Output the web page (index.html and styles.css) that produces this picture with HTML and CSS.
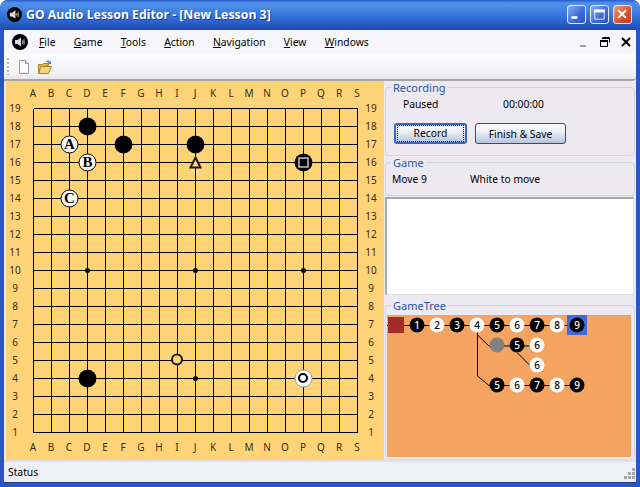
FILE: index.html
```html
<!DOCTYPE html>
<html lang="en">
<head>
<meta charset="utf-8">
<title>GO Audio Lesson Editor</title>
<link rel="stylesheet" href="styles.css">
</head>
<body>
<div class="window">
  <header class="titlebar">
    <svg class="app-icon" viewBox="0 0 16 16"><circle cx="8" cy="8" r="8" fill="#000"/><path d="M3 6h2.500L9 3.500v9L5.500 10H3z" fill="#ddd"/><path d="M10.500 6v4M12 5v6M10 8h3" stroke="#999" fill="none"/></svg>
    <span class="title-text">GO Audio Lesson Editor - [New Lesson 3]</span>
    <div class="caption-buttons">
      <span class="cap cap-blue"><svg viewBox="0 0 20 20"><rect x="4" y="12" width="7" height="3" fill="#fff"/></svg></span>
      <span class="cap cap-blue"><svg viewBox="0 0 20 20"><path d="M4.500 6.500h11v9h-11z M4 5h12v2H4z" fill="none" stroke="#fff"/><rect x="4" y="4" width="12" height="2" fill="#fff"/></svg></span>
      <span class="cap cap-red"><svg viewBox="0 0 20 20"><path d="M5 5l9 9M14 5l-9 9" stroke="#fff" stroke-width="2.400"/></svg></span>
    </div>
  </header>
  <div class="client">
    <nav class="menubar">
      <svg class="menu-icon" viewBox="0 0 16 16"><circle cx="8" cy="8" r="8" fill="#000"/><path d="M3 6h2.500L9 3.500v9L5.500 10H3z" fill="#ddd"/><path d="M10.500 6v4M12 5v6M10 8h3" stroke="#999" fill="none"/></svg>
      <span class="menu-item"><u>F</u>ile</span>
      <span class="menu-item"><u>G</u>ame</span>
      <span class="menu-item"><u>T</u>ools</span>
      <span class="menu-item"><u>A</u>ction</span>
      <span class="menu-item"><u>N</u>avigation</span>
      <span class="menu-item"><u>V</u>iew</span>
      <span class="menu-item"><u>W</u>indows</span>
      <div class="mdi-buttons">
        <svg viewBox="0 0 12 12"><rect x="2" y="9" width="6" height="2" fill="#a0a0a0"/></svg>
        <svg viewBox="0 0 12 12"><path d="M3.500 1.500h7v5M1.500 4.500h7v6h-7z M3 2.500h7" fill="none" stroke="#000"/><path d="M1 4h8v2H1z" fill="#000"/></svg>
        <svg viewBox="0 0 12 12"><path d="M2 2l8 8M10 2l-8 8" stroke="#000" stroke-width="2"/></svg>
      </div>
    </nav>
    <div class="toolbar">
      <span class="grip"></span>
      <svg class="tool" viewBox="0 0 16 16"><path d="M3.500 1.500h6l3 3v10h-9z" fill="#fff" stroke="#8a9ab5"/><path d="M9.500 1.500v3h3" fill="#dfe6f0" stroke="#8a9ab5"/></svg>
      <svg class="tool" viewBox="0 0 16 16"><path d="M1.500 5.500h4l1-1h5v2l-2 0-7 8h-1z" fill="#e8b84a" stroke="#a88430"/><path d="M3.500 7.500h11l-3 7h-9.500z" fill="#f5d677" stroke="#a88430"/><path d="M9 3c1-2 3-2 4 0l1-1v3h-3l1-1c-.5-.8-1.500-1-3-1z" fill="#4a78b8"/></svg>
    </div>
    <main class="main">
      <section class="board">
        <svg class="board-svg" viewBox="6 81 378 379" width="378" height="379">
          <path class="grid" d="M33.500 108.500H357.500M33.500 126.500H357.500M33.500 144.500H357.500M33.500 162.500H357.500M33.500 180.500H357.500M33.500 198.500H357.500M33.500 216.500H357.500M33.500 234.500H357.500M33.500 252.500H357.500M33.500 270.500H357.500M33.500 288.500H357.500M33.500 306.500H357.500M33.500 324.500H357.500M33.500 342.500H357.500M33.500 360.500H357.500M33.500 378.500H357.500M33.500 396.500H357.500M33.500 414.500H357.500M33.500 432.500H357.500M33.500 108.500V432.500M51.500 108.500V432.500M69.500 108.500V432.500M87.500 108.500V432.500M105.500 108.500V432.500M123.500 108.500V432.500M141.500 108.500V432.500M159.500 108.500V432.500M177.500 108.500V432.500M195.500 108.500V432.500M213.500 108.500V432.500M231.500 108.500V432.500M249.500 108.500V432.500M267.500 108.500V432.500M285.500 108.500V432.500M303.500 108.500V432.500M321.500 108.500V432.500M339.500 108.500V432.500M357.500 108.500V432.500"/>
          <g class="labels">
            <text x="33" y="96.500">A</text><text x="51" y="96.500">B</text><text x="69" y="96.500">C</text><text x="87" y="96.500">D</text><text x="105" y="96.500">E</text><text x="123" y="96.500">F</text><text x="141" y="96.500">G</text><text x="159" y="96.500">H</text><text x="177" y="96.500">I</text><text x="195" y="96.500">J</text><text x="213" y="96.500">K</text><text x="231" y="96.500">L</text><text x="249" y="96.500">M</text><text x="267" y="96.500">N</text><text x="285" y="96.500">O</text><text x="303" y="96.500">P</text><text x="321" y="96.500">Q</text><text x="339" y="96.500">R</text><text x="357" y="96.500">S</text>
            <text x="33" y="451">A</text><text x="51" y="451">B</text><text x="69" y="451">C</text><text x="87" y="451">D</text><text x="105" y="451">E</text><text x="123" y="451">F</text><text x="141" y="451">G</text><text x="159" y="451">H</text><text x="177" y="451">I</text><text x="195" y="451">J</text><text x="213" y="451">K</text><text x="231" y="451">L</text><text x="249" y="451">M</text><text x="267" y="451">N</text><text x="285" y="451">O</text><text x="303" y="451">P</text><text x="321" y="451">Q</text><text x="339" y="451">R</text><text x="357" y="451">S</text>
            <text x="15" y="112">19</text><text x="15" y="130">18</text><text x="15" y="148">17</text><text x="15" y="166">16</text><text x="15" y="184">15</text><text x="15" y="202">14</text><text x="15" y="220">13</text><text x="15" y="238">12</text><text x="15" y="256">11</text><text x="15" y="274">10</text><text x="15" y="292">9</text><text x="15" y="310">8</text><text x="15" y="328">7</text><text x="15" y="346">6</text><text x="15" y="364">5</text><text x="15" y="382">4</text><text x="15" y="400">3</text><text x="15" y="418">2</text><text x="15" y="436">1</text>
            <text x="371" y="112">19</text><text x="371" y="130">18</text><text x="371" y="148">17</text><text x="371" y="166">16</text><text x="371" y="184">15</text><text x="371" y="202">14</text><text x="371" y="220">13</text><text x="371" y="238">12</text><text x="371" y="256">11</text><text x="371" y="274">10</text><text x="371" y="292">9</text><text x="371" y="310">8</text><text x="371" y="328">7</text><text x="371" y="346">6</text><text x="371" y="364">5</text><text x="371" y="382">4</text><text x="371" y="400">3</text><text x="371" y="418">2</text><text x="371" y="436">1</text>
          </g>
          <circle cx="87.500" cy="270.500" r="2.500"/><circle cx="195.500" cy="270.500" r="2.500"/><circle cx="303.500" cy="270.500" r="2.500"/><circle cx="195.500" cy="378.500" r="2.500"/>
          <circle cx="87.500" cy="126.500" r="9"/><circle cx="123.500" cy="144.500" r="9"/><circle cx="195.500" cy="144.500" r="9"/><circle cx="87.500" cy="378.500" r="9"/>
          <circle cx="303.500" cy="162.500" r="9"/>
          <rect x="299" y="158" width="9" height="9" class="square-mark"/>
          <g class="white-stone"><circle cx="69.500" cy="144.500" r="8.500"/><circle cx="87.500" cy="162.500" r="8.500"/><circle cx="69.500" cy="198.500" r="8.500"/></g>
          <g class="stone-labels"><text x="69.500" y="149">A</text><text x="87.500" y="167">B</text><text x="69.500" y="203">C</text></g>
          <path class="triangle" d="M195.500 157.500l5 10h-10z"/>
          <circle class="ring" cx="177" cy="359.500" r="5"/>
          <circle class="last-white" cx="303.500" cy="378.500" r="8.500"/>
          <circle class="last-ring" cx="303" cy="378" r="4"/>
        </svg>
      </section>
      <aside class="side">
        <fieldset class="group group-rec">
          <legend>Recording</legend>
          <div class="status-row"><span class="paused">Paused</span><span>00:00:00</span></div>
          <div class="button-row">
            <button class="btn btn-record" type="button"><span>Record</span></button>
            <button class="btn btn-finish" type="button"><span>Finish &amp; Save</span></button>
          </div>
        </fieldset>
        <fieldset class="group group-game">
          <legend>Game</legend>
          <div class="game-row"><span class="move">Move 9</span><span>White to move</span></div>
        </fieldset>
        <div class="notes"></div>
        <fieldset class="group group-tree">
          <legend>GameTree</legend>
          <svg class="tree" viewBox="387 315 244 142" width="244" height="142">
            <path class="tree-line" d="M387 325.500H577M477.500 325.500V376L489 385.500H577M477.500 335L489 346H537M517.500 353L530 365.500"/>
            <rect x="388" y="317" width="16" height="16" fill="#a52a2a"/>
            <rect x="567" y="315" width="20" height="20" fill="#4169e1"/>
            <circle cx="417" cy="325" r="7.500"/><circle cx="457" cy="325" r="7.500"/><circle cx="497" cy="325" r="7.500"/><circle cx="537" cy="325" r="7.500"/><circle cx="577" cy="325" r="7.500"/>
            <circle cx="517" cy="345" r="7.500"/><circle cx="497" cy="385" r="7.500"/><circle cx="537" cy="385" r="7.500"/><circle cx="577" cy="385" r="7.500"/>
            <circle cx="497" cy="345" r="7.500" fill="#808080"/>
            <g fill="#fff"><circle cx="437" cy="325" r="7.500"/><circle cx="477" cy="325" r="7.500"/><circle cx="517" cy="325" r="7.500"/><circle cx="557" cy="325" r="7.500"/><circle cx="537" cy="345" r="7.500"/><circle cx="537" cy="365" r="7.500"/><circle cx="517" cy="385" r="7.500"/><circle cx="557" cy="385" r="7.500"/></g>
            <g class="num-w"><text x="417" y="329">1</text><text x="457" y="329">3</text><text x="497" y="329">5</text><text x="537" y="329">7</text><text x="577" y="329">9</text><text x="517" y="349">5</text><text x="497" y="389">5</text><text x="537" y="389">7</text><text x="577" y="389">9</text></g>
            <g class="num-b"><text x="437" y="329">2</text><text x="477" y="329">4</text><text x="517" y="329">6</text><text x="557" y="329">8</text><text x="537" y="349">6</text><text x="537" y="369">6</text><text x="517" y="389">6</text><text x="557" y="389">8</text></g>
          </svg>
        </fieldset>
      </aside>
    </main>
    <footer class="statusbar">
      <span>Status</span>
      <svg class="size-grip" viewBox="0 0 12 12"><path d="M9 0h3v3H9zM5 4h3v3H5zM9 4h3v3H9zM1 8h3v3H1zM5 8h3v3H5zM9 8h3v3H9z" fill="#a8a8a8"/></svg>
    </footer>
  </div>
</div>
</body>
</html>
```
FILE: styles.css
```css
* { box-sizing: border-box; }
html, body { margin: 0; padding: 0; }
body {
  width: 640px;
  height: 487px;
  overflow: hidden;
  font-family: "Noto Sans", "Liberation Sans", sans-serif;
  font-size: 10.300px;
  color: #000;
}
.window {
  width: 640px;
  height: 487px;
  display: flex;
  flex-direction: column;
  background: #2a55c4;
  border-radius: 8px 8px 0 0;
  overflow: hidden;
}
.titlebar {
  height: 30px;
  flex: none;
  display: flex;
  align-items: center;
  padding: 0 8px 2px 7px;
  background: linear-gradient(to bottom, #2a5ac8 0, #4f92ec 3px, #4a8ae6 7px, #3a78dc 14px, #2a62cc 22px, #2350b8 28px, #1f48ac 30px);
}
.app-icon { width: 15px; height: 15px; flex: none; }
.title-text {
  margin-left: 4px;
  font-family: "Noto Sans", sans-serif;
  font-size: 12.300px;
  font-weight: bold;
  color: #fff;
  text-shadow: 1px 1px 0 #1a3f9c;
}
.caption-buttons { margin-left: auto; display: flex; gap: 4px; }
.cap {
  width: 19px;
  height: 19px;
  border: 1px solid #dfe8fa;
  border-radius: 3px;
}
.cap svg { display: block; width: 17px; height: 17px; }
.cap-blue { background: linear-gradient(135deg, #8ab0f0, #3a68d8 60%, #2f58c4); }
.cap-red { background: linear-gradient(135deg, #eca085, #d8502a 60%, #c23c18); }
.client {
  flex: 1;
  min-height: 0;
  margin: 0 4px 4px;
  display: flex;
  flex-direction: column;
  background: #ece9f0;
  border-bottom: 1px solid #1c3c90;
}
.menubar {
  height: 24px;
  flex: none;
  display: flex;
  align-items: center;
  padding: 0 4px 0 8px;
  background: #f7f7fb;
}
.menu-icon { width: 16px; height: 16px; flex: none; margin-right: 11px; }
.menu-item { margin-right: 18.300px; white-space: nowrap; }
.mdi-buttons { margin-left: auto; display: flex; gap: 9px; }
.mdi-buttons svg { width: 12px; height: 12px; display: block; }
.toolbar {
  height: 27px;
  flex: none;
  display: flex;
  align-items: center;
  padding-left: 3px;
  background: linear-gradient(to bottom, #fdfdfe, #f4f4f7 70%, #e8e8ec);
  border-bottom: 2px solid #a6a6a6;
  border-radius: 0 0 4px 0;
}
.grip {
  width: 2px;
  height: 17px;
  margin-right: 7px;
  background: repeating-linear-gradient(to bottom, #b4b4b8 0 2px, transparent 2px 4px);
}
.tool { width: 16px; height: 16px; margin-right: 5px; }
.main { flex: 1; min-height: 0; display: flex; }
.board { width: 380px; flex: none; padding-left: 2px; background: #ece9f0; }
.board-svg { display: block; background: #ffd478; }
.grid { stroke: #000; stroke-width: 1; fill: none; shape-rendering: crispEdges; }
.labels text {
  font-family: "Noto Sans", sans-serif;
  font-size: 10px;
  fill: #3c2a10;
  text-anchor: middle;
}
.white-stone circle { fill: #fff; stroke: #000; stroke-width: 1; }
.stone-labels text {
  font-family: "Liberation Serif", serif;
  font-size: 15px;
  font-weight: bold;
  text-anchor: middle;
}
.square-mark { fill: #000; stroke: #f0f0f0; stroke-width: 1.200; }
.triangle { fill: #ffd478; stroke: #1a1a1a; stroke-width: 2; }
.ring { fill: #ffd478; stroke: #201808; stroke-width: 2; }
.last-white { fill: #fff; stroke: #999; stroke-width: 1; }
.last-ring { fill: #fff; stroke: #000; stroke-width: 2; }
.side {
  flex: 1;
  min-width: 0;
  display: flex;
  flex-direction: column;
  padding: 0 1px;
  background: #ece9f0;
}
.group {
  margin: 0;
  padding: 0;
  min-width: 0;
  border: 1px solid #d5d5dc;
  border-radius: 4px;
}
.group legend {
  padding: 0 2px;
  margin-left: 5px;
  color: #2b55a8;
  font-size: 11px;
  line-height: 13px;
}
.group-rec { height: 75px; flex: none; }
.status-row { display: flex; padding: 3px 0 0 17px; line-height: 15px; }
.paused { width: 100px; }
.button-row { display: flex; gap: 8px; padding: 11px 0 0 8px; }
.btn {
  height: 21px;
  padding: 0;
  font: inherit;
  color: #000;
  border: 1px solid #2c4f8c;
  border-radius: 3px;
  background: linear-gradient(to bottom, #fafbfd, #eceff6 40%, #b6c5de);
}
.btn-record { width: 73px; border: 2px solid #3867c0; }
.btn-record span { display: block; margin: 0 1px; line-height: 15px; border: 1px dotted #000; }
.btn-finish { width: 91px; }
.group-game { height: 40px; flex: none; }
.game-row { display: flex; padding: 3px 0 0 6px; line-height: 15px; }
.move { width: 78px; }
.notes {
  height: 98px;
  flex: none;
  margin: 1px 1px 0 0;
  background: #fff;
  border-top: 2px solid #a8a8a8;
  border-left: 2px solid #a8a8a8;
  border-right: 1px solid #e0e0e0;
  border-bottom: 1px solid #e0e0e0;
}
.group-tree { flex: 1; margin-top: 4px; min-height: 0; }
.tree { display: block; margin: 3px 0 0 1px; background: #f4a460; }
.tree-line { stroke: #000; fill: none; }
.num-w text, .num-b text { font-size: 10px; font-weight: 500; text-anchor: middle; font-family: "Noto Sans", sans-serif; }
.num-w text { fill: #fff; }
.num-b text { fill: #000; }
.statusbar {
  height: 22px;
  flex: none;
  display: flex;
  align-items: center;
  justify-content: space-between;
  padding: 0 1px 0 4px;
  background: #eef0f8;
  border-top: 2px solid #e0e0e6;
}
.size-grip { width: 12px; height: 12px; align-self: flex-end; margin-bottom: 2px; }
```
